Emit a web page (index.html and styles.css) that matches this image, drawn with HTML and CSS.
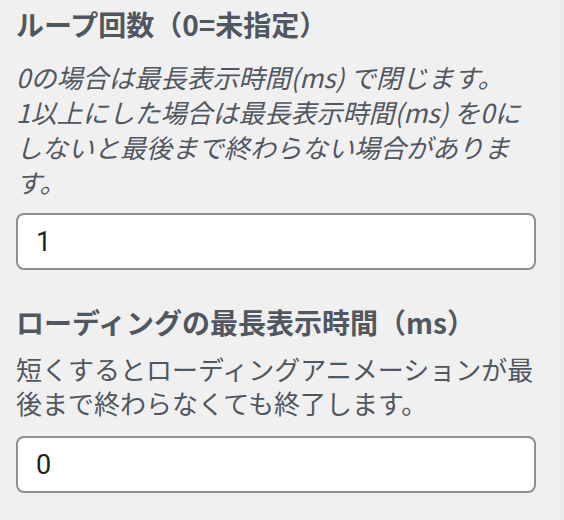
FILE: index.html
```html
<!DOCTYPE html>
<html lang="ja">
<head>
<meta charset="utf-8">
<title>設定</title>
<link rel="stylesheet" href="styles.css">
</head>
<body>
<div class="panel">
  <div class="field">
    <label class="field-label" for="loop">ループ回数（0=未指定）</label>
    <p class="field-help field-help--italic">0の場合は最長表示時間(ms) で閉じます。<br>1以上にした場合は最長表示時間(ms) を0にしないと最後まで終わらない場合があります。</p>
    <input class="field-input" id="loop" type="text" value="1">
  </div>
  <div class="field field--second">
    <label class="field-label" for="maxtime">ローディングの最長表示時間（ms）</label>
    <p class="field-help field-help--second">短くするとローディングアニメーションが最後まで終わらなくても終了します。</p>
    <input class="field-input" id="maxtime" type="text" value="0">
  </div>
</div>
<div class="edge"></div>
</body>
</html>
```
FILE: styles.css
```css
html, body {
  margin: 0;
  padding: 0;
  background: #f0f0f1;
  height: 100%;
}
body {
  font-family: "Noto Sans CJK JP", "Noto Sans", sans-serif;
  overflow: hidden;
}
.panel {
  width: 520px;
  padding: 6px 0 0 16px;
  display: flex;
  flex-direction: column;
}
.field {
  display: flex;
  flex-direction: column;
}
.field--second {
  margin-top: 34px;
}
.field-label {
  display: block;
  font-size: 28px;
  line-height: 36px;
  font-weight: 700;
  color: #50575e;
}
.field-help {
  margin: 17px 0 0;
  font-size: 26px;
  line-height: 35px;
  color: #50575e;
}
.field-help--italic {
  font-style: italic;
}
.field-help--second {
  margin-top: 12px;
  line-height: 34px;
}
.field-input {
  box-sizing: border-box;
  width: 520px;
  height: 57px;
  margin: 14px 0 0;
  padding: 0 18px;
  border: 2px solid #8c8f94;
  border-radius: 8px;
  background: #fff;
  font-family: Roboto, "Noto Sans", sans-serif;
  font-size: 27px;
  color: #1d2327;
  outline: none;
}
.field--second .field-input {
  margin-top: 16px;
}
.edge {
  position: fixed;
  top: 0;
  right: 0;
  width: 2px;
  height: 100%;
  background: #ececed;
  border-left: 1px solid #e2e2e4;
}
```
